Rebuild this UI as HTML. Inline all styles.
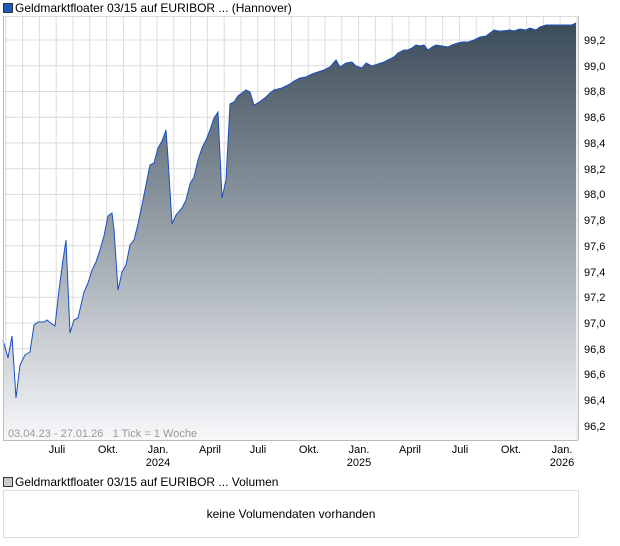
<!DOCTYPE html><html><head><style>
body{margin:0;width:620px;height:546px;background:#fff;font-family:"Liberation Sans",sans-serif;position:relative;overflow:hidden}
.t{position:absolute;font-size:12px;color:#000;white-space:nowrap}
.yl{position:absolute;left:584px;font-size:11px;color:#000}
.xl{position:absolute;font-size:11px;color:#000;text-align:center;width:40px;line-height:13px}
</style></head><body>
<div style="position:absolute;left:3px;top:3px;width:8px;height:8px;background:#1d5bbf;border:1px solid #333"></div>
<div class="t" style="left:15px;top:1px">Geldmarktfloater 03/15 auf EURIBOR ... (Hannover)</div>
<svg style="position:absolute;left:0;top:0" width="620" height="546">
<defs><linearGradient id="g" x1="0" y1="0" x2="0" y2="1"><stop offset="0" stop-color="#3b4b58"/><stop offset="0.45" stop-color="#8d98a1"/><stop offset="1" stop-color="#f7f8fa"/></linearGradient></defs>
<g stroke="#dcdcdc" stroke-width="1" id="grid"></g>
<path id="area" fill="url(#g)" stroke="none"/>
<path id="line" fill="none" stroke="#1a4fc4" stroke-width="1"/>
<line x1="3.5" y1="16" x2="3.5" y2="440" stroke="#bbb"/>
<line x1="578.5" y1="16" x2="578.5" y2="440" stroke="#bbb"/>
<line x1="3" y1="440.5" x2="578" y2="440.5" stroke="#bbb"/>
</svg>
<div class="t" style="left:8px;top:428px;font-size:11px;color:#999">03.04.23 - 27.01.26 &nbsp; 1 Tick = 1 Woche</div>
<div class="xl" style="left:37px;top:444px">Juli</div>
<div class="xl" style="left:88px;top:444px">Okt.</div>
<div class="xl" style="left:138px;top:444px">Jan.<br>2024</div>
<div class="xl" style="left:190px;top:444px">April</div>
<div class="xl" style="left:238px;top:444px">Juli</div>
<div class="xl" style="left:289px;top:444px">Okt.</div>
<div class="xl" style="left:339px;top:444px">Jan.<br>2025</div>
<div class="xl" style="left:390px;top:444px">April</div>
<div class="xl" style="left:440px;top:444px">Juli</div>
<div class="xl" style="left:491px;top:444px">Okt.</div>
<div class="xl" style="left:542px;top:444px">Jan.<br>2026</div>
<div id="yl"></div>
<div style="position:absolute;left:3px;top:477px;width:8px;height:8px;background:#ccc;border:1px solid #333"></div>
<div class="t" style="left:15px;top:475px">Geldmarktfloater 03/15 auf EURIBOR ... Volumen</div>
<div style="position:absolute;left:3px;top:490px;width:574px;height:46px;border:1px solid #ddd;text-align:center;line-height:46px;font-size:12px">keine Volumendaten vorhanden</div>
<script>
var g=document.getElementById('grid'),s='';
for(var x=5.8;x<578;x+=16.8)s+='<line x1="'+x.toFixed(1)+'" y1="16" x2="'+x.toFixed(1)+'" y2="440"/>';
var yl='';
for(var i=0;i<16;i++){var y=40+i*25.73;s+='<line x1="3" y1="'+y.toFixed(1)+'" x2="578" y2="'+y.toFixed(1)+'"/>';
var v=(99.2-i*0.2).toFixed(1).replace('.',',');yl+='<div class="yl" style="top:'+(y-5).toFixed(0)+'px">'+v+'</div>';}
s+='<line x1="3" y1="16.5" x2="578" y2="16.5"/>';
g.innerHTML=s;document.getElementById('yl').innerHTML=yl;
var p=[[3,340],[8,358],[12,336],[16,398],[20,365],[25,355],[30,352],[34,325],[38,322],[44,322],[47,320],[52,324],[55,326],[59,290],[63,260],[66,240],[70,333],[74,320],[78,318],[84,292],[88,283],[92,270],[96,262],[100,250],[104,236],[108,216],[112,213],[114,230],[118,290],[122,272],[126,265],[130,245],[134,240],[138,224],[142,205],[146,185],[150,165],[154,163],[158,148],[162,141],[166,130],[168,158],[172,224],[176,215],[182,208],[186,200],[190,184],[194,177],[198,160],[202,148],[206,140],[210,130],[214,118],[218,112],[222,198],[226,180],[230,104],[234,102],[238,96],[242,93],[246,90],[250,92],[254,105],[258,103],[262,100],[266,97],[270,93],[274,90],[278,89],[282,88],[286,86],[290,84],[294,81],[300,78],[306,77],[312,74],[318,72],[324,70],[330,67],[336,60],[340,67],[346,63],[352,62],[356,66],[362,68],[366,63],[372,66],[378,64],[384,62],[388,60],[394,57],[398,53],[404,50],[408,50],[412,48],[416,45],[420,46],[424,45],[428,50],[432,47],[436,45],[442,46],[448,47],[452,45],[458,43],[462,42],[468,42],[474,40],[480,37],[486,36],[490,33],[494,30],[498,31],[502,31],[510,30],[514,31],[520,29],[526,30],[530,28],[536,30],[540,27],[546,25],[560,25],[572,25],[576,23]];
var d='M'+p.map(function(q){return q[0]+','+q[1]}).join(' L');
document.getElementById('line').setAttribute('d',d);
document.getElementById('area').setAttribute('d',d+' L576,440 L3,440 Z');
</script>
</body></html>
